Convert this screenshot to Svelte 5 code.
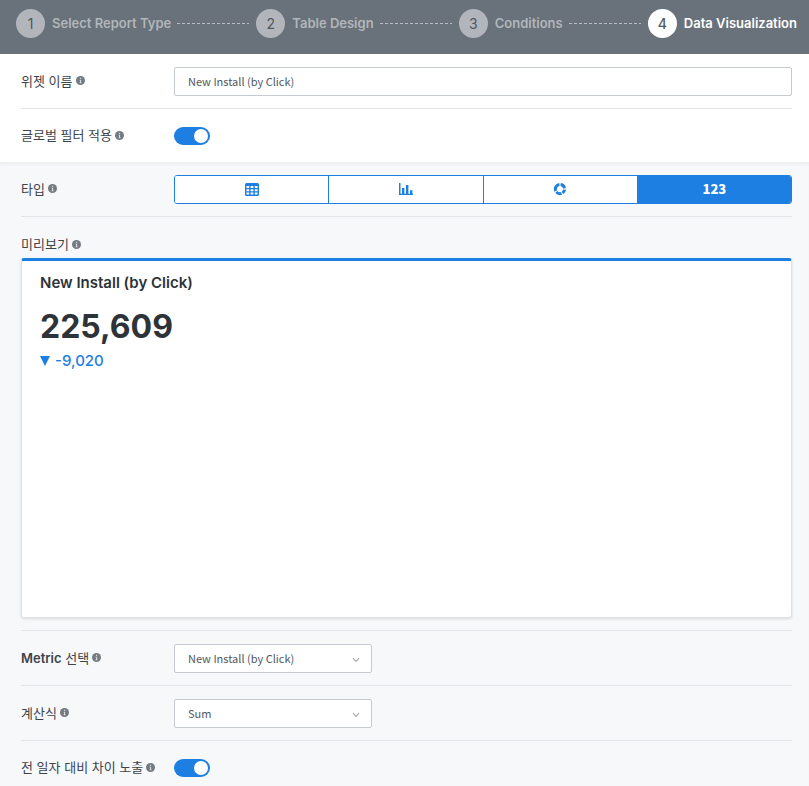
<script>
  const steps = [
    'Select Report Type',
    'Table Design',
    'Conditions',
    'Data Visualization',
  ];
  const types = ['table', 'bar', 'donut', 'number'];
  const metrics = ['New Install (by Click)'];
  const formulas = ['Sum', 'Average'];

  let currentStep = 3;
  let widgetName = 'New Install (by Click)';
  let globalFilter = true;
  let type = 'number';
  let metric = metrics[0];
  let formula = formulas[0];
  let showDiff = true;
</script>

<style>
  :global(body) {
    margin: 0;
    background: #f7f8fa;
    color: #3c4349;
    font-family: Inter, 'Noto Sans CJK KR', sans-serif;
  }
  .steps {
    display: flex;
    align-items: center;
    margin: 0;
    padding: 9px 12px 16px 16px;
    background: #69717a;
    list-style: none;
  }
  .step {
    display: flex;
    align-items: center;
    flex: 1 1 auto;
    color: #b2b6bb;
    font-size: 13px;
    font-weight: 600;
    line-height: 29px;
    white-space: nowrap;
  }
  .step:last-child {
    flex: none;
  }
  .circle {
    width: 29px;
    height: 29px;
    margin-right: 7px;
    border-radius: 50%;
    background: #b2b5bb;
    color: #50595f;
    font-size: 14px;
    font-weight: 400;
    text-align: center;
  }
  .current {
    color: #fff;
  }
  .current .circle {
    background: #fff;
    font-weight: 500;
  }
  .dash {
    flex: 1 1 0;
    height: 1px;
    margin: 0 7px 0 6px;
    background: repeating-linear-gradient(90deg, #b9bdc1 0 3px, transparent 3px 5px);
  }

  section {
    padding: 0 17px 0 21px;
  }
  .basic {
    background: #fff;
  }
  .visual {
    border-top: 1px solid #eceef0;
    box-shadow: inset 0 3px 3px -1px #eff0f2;
  }
  .row {
    display: flex;
    align-items: center;
    padding: 13px 0 12px;
    border-bottom: 1px solid #e3e6e9;
  }
  .row.end {
    border-bottom: none;
  }
  .type-row {
    padding: 12px 0;
  }
  .last {
    padding-bottom: 4px;
    border-bottom: none;
  }
  .label {
    display: flex;
    align-items: center;
    gap: 3px;
    flex: none;
    width: 153px;
    padding-bottom: 2px;
    font-size: 13px;
    font-weight: 400;
    line-height: 20px;
    white-space: nowrap;
  }
  .label b {
    font-weight: 600;
  }
  .info {
    width: 9px;
    height: 9px;
    flex: none;
  }
  .text,
  select {
    box-sizing: border-box;
    height: 29px;
    margin: 0;
    padding: 0 13px 2px;
    border: 1px solid #c6cbd2;
    border-radius: 2px;
    background: #fff;
    color: #50575e;
    font-family: 'Noto Sans CJK KR', sans-serif;
    font-size: 11px;
  }
  .text {
    flex: 1;
    min-width: 0;
  }
  .select {
    position: relative;
    width: 198px;
    height: 29px;
  }
  select {
    width: 100%;
    appearance: none;
  }
  .select svg {
    position: absolute;
    right: 12px;
    top: 13px;
    width: 8px;
    height: 6px;
    pointer-events: none;
  }
  .switch {
    display: flex;
    align-items: center;
    height: 28px;
  }
  .switch input {
    appearance: none;
    width: 36px;
    height: 18px;
    margin: 0;
    padding: 2px;
    box-sizing: border-box;
    border-radius: 9px;
    background: #b2b5bb;
    cursor: pointer;
  }
  .switch input::before {
    content: '';
    display: block;
    width: 14px;
    height: 14px;
    border-radius: 50%;
    background: #fff;
  }
  .switch input:checked {
    background: #1e7fe3;
  }
  .switch input:checked::before {
    margin-left: auto;
  }

  .types {
    display: flex;
    flex: 1;
    height: 29px;
    box-sizing: border-box;
    border: 1px solid #1e7fe3;
    border-radius: 3px;
    overflow: hidden;
    background: #fff;
  }
  .types button {
    display: flex;
    align-items: center;
    justify-content: center;
    flex: 1 1 0;
    margin: 0;
    padding: 0 0 2px;
    border: none;
    border-right: 1px solid #1e7fe3;
    background: #fff;
    color: #1e7fe3;
    font-family: 'Noto Sans CJK KR', sans-serif;
    font-size: 13px;
    font-weight: 900;
    line-height: 20px;
    cursor: pointer;
  }
  .types button:last-child {
    border-right: none;
  }
  .types .selected {
    background: #1e7fe3;
    color: #fff;
  }
  .types svg {
    width: 14px;
    height: 14px;
  }

  .preview {
    padding: 17px 0 12px;
    border-bottom: 1px solid #e3e6e9;
  }
  .card {
    box-sizing: border-box;
    min-height: 360px;
    margin-top: 2px;
    padding: 12px 18px;
    border: 1px solid #dfe2e5;
    border-top: 3px solid #1e7fe3;
    border-radius: 3px;
    background: #fff;
    box-shadow: 0 1px 3px rgba(0, 0, 0, 0.12);
    color: #2d3338;
  }
  h2 {
    margin: 0;
    font-size: 15px;
    font-weight: 600;
    line-height: 20px;
  }
  .value {
    margin: 14px 0 0;
    font-size: 32px;
    font-weight: 700;
    line-height: 40px;
  }
  .diff {
    display: flex;
    align-items: center;
    gap: 5px;
    margin: 4px 0 0;
    color: #1e7fe3;
    font-size: 15px;
    font-weight: 500;
    line-height: 20px;
  }
  .diff svg {
    width: 10px;
    height: 10px;
  }
</style>

{#snippet info()}
  <svg class="info" viewBox="0 0 9 9" aria-hidden="true">
    <circle cx="4.5" cy="4.5" r="4.5" fill="#737a80" />
    <path d="M4 1.8h1.1v1.1H4zM3.6 3.8h1.5v2.6h.5v.8H3.5v-.8H4V4.6h-.4z" fill="#d9dcde" />
  </svg>
{/snippet}

{#snippet chevron()}
  <svg viewBox="0 0 8 6" fill="none" stroke="#a3a9b0" stroke-width="1.2" aria-hidden="true">
    <path d="M1 1.2L4 4.4L7 1.2" />
  </svg>
{/snippet}

<ol class="steps">
  {#each steps as step, i}
    <li class="step" class:current={i === currentStep}>
      <span class="circle">{i + 1}</span>
      <span>{step}</span>
      {#if i < steps.length - 1}
        <span class="dash"></span>
      {/if}
    </li>
  {/each}
</ol>

<section class="basic">
  <div class="row">
    <label class="label" for="widget-name">위젯 이름 {@render info()}</label>
    <input id="widget-name" class="text" type="text" bind:value={widgetName} />
  </div>
  <div class="row end">
    <label class="label" for="global-filter">글로벌 필터 적용 {@render info()}</label>
    <div class="switch">
      <input id="global-filter" type="checkbox" role="switch" bind:checked={globalFilter} />
    </div>
  </div>
</section>

<section class="visual">
  <div class="row type-row">
    <span class="label" id="type-label">타입 {@render info()}</span>
    <div class="types" role="group" aria-labelledby="type-label">
      {#each types as t}
        <button
          type="button"
          class:selected={type === t}
          aria-pressed={type === t}
          aria-label={t === 'number' ? null : t}
          on:click={() => (type = t)}
        >
          {#if t === 'table'}
            <svg viewBox="0 0 14 14" aria-hidden="true">
              <rect y="1" width="14" height="13" rx="1.5" fill="currentColor" />
              <path
                d="M1.4 4h2.800v2H1.400zM5.600 4h2.800v2H5.600zM9.800 4h2.800v2H9.800zM1.400 7.300h2.800v2H1.400zM5.600 7.300h2.800v2H5.600zM9.800 7.300h2.800v2H9.800zM1.400 10.600h2.800v2H1.400zM5.600 10.600h2.800v2H5.600zM9.800 10.600h2.800v2H9.800z"
                fill="#fff"
              />
            </svg>
          {:else if t === 'bar'}
            <svg viewBox="0 0 14 14" fill="currentColor" aria-hidden="true">
              <path d="M0 1h1.500v10.700H14V13H0zM3 6h2.400v6H3zM7 3h2.400v9H7zM11 8.300h2.400V12H11z" />
            </svg>
          {:else if t === 'donut'}
            <svg viewBox="0 0 14 14" fill="none" stroke="currentColor" stroke-width="3" aria-hidden="true">
              <path d="M7.600 2.500A4.600 4.600 0 0 1 11.500 6.400M11.500 7.600A4.600 4.600 0 0 1 9.500 10.900M8.500 11.400A4.600 4.600 0 0 1 3.400 9.900M2.800 9A4.600 4.600 0 0 1 6.400 2.500" />
            </svg>
          {:else}
            123
          {/if}
        </button>
      {/each}
    </div>
  </div>

  <div class="preview">
    <span class="label">미리보기 {@render info()}</span>
    <div class="card">
      <h2>{metric}</h2>
      <p class="value">225,609</p>
      {#if showDiff}
        <p class="diff">
          <svg viewBox="0 0 10 10" fill="currentColor" aria-hidden="true"><path d="M0 0h10L5 10z" /></svg>
          -9,020
        </p>
      {/if}
    </div>
  </div>

  <div class="row">
    <label class="label" for="metric"><span><b>Metric</b> 선택</span> {@render info()}</label>
    <div class="select">
      <select id="metric" bind:value={metric}>
        {#each metrics as m}
          <option value={m}>{m}</option>
        {/each}
      </select>
      {@render chevron()}
    </div>
  </div>
  <div class="row">
    <label class="label" for="formula">계산식 {@render info()}</label>
    <div class="select">
      <select id="formula" bind:value={formula}>
        {#each formulas as f}
          <option value={f}>{f}</option>
        {/each}
      </select>
      {@render chevron()}
    </div>
  </div>
  <div class="row last">
    <label class="label" for="show-diff">전 일자 대비 차이 노출 {@render info()}</label>
    <div class="switch">
      <input id="show-diff" type="checkbox" role="switch" bind:checked={showDiff} />
    </div>
  </div>
</section>
